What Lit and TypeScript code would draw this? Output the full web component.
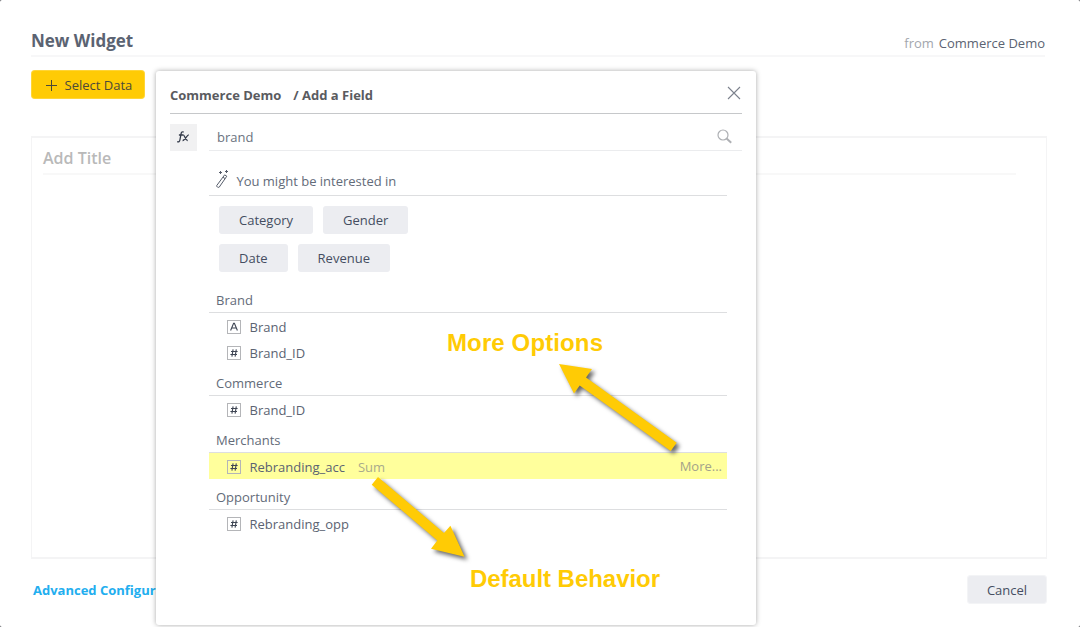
import { LitElement, html, css, svg } from "lit";
import { customElement, property } from "lit/decorators.js";

interface Field {
  kind: string;
  name: string;
  aggregate?: string;
}

interface Group {
  title: string;
  fields: Field[];
}

const SUGGESTIONS: string[][] = [
  ["Category", "Gender"],
  ["Date", "Revenue"],
];

const GROUPS: Group[] = [
  { title: "Brand", fields: [{ kind: "A", name: "Brand" }, { kind: "#", name: "Brand_ID" }] },
  { title: "Commerce", fields: [{ kind: "#", name: "Brand_ID" }] },
  { title: "Merchants", fields: [{ kind: "#", name: "Rebranding_acc", aggregate: "Sum" }] },
  { title: "Opportunity", fields: [{ kind: "#", name: "Rebranding_opp" }] },
];

@customElement("field-row")
class FieldRow extends LitElement {
  @property({ attribute: false }) field!: Field;

  static styles = css`
    :host { display: block; }
    .row {
      display: flex; align-items: center; height: 26px; box-sizing: border-box;
      padding: 0 5px 0 18px; color: #5b6372;
    }
    .active { background: #ffff9c; }
    .kind { width: 14px; height: 14px; margin: 1px 8.5px 0 0; flex: none; }
    .name, .agg { line-height: 18px; padding-top: 2px; }
    .agg { margin-left: 13px; color: #a9aa8c; }
    .more { margin-left: auto; color: #a3a38a; line-height: 18px; }
  `;

  render() {
    const f = this.field;
    const glyph =
      f.kind === "A"
        ? svg`<path d="M3.6 10.5 L6.6 3.4 H7.4 L10.4 10.5 M4.7 8 H9.3" />`
        : svg`<path d="M6.1 3.4 L4.9 10.6 M9.3 3.4 L8.1 10.6 M4 5.5 H10.6 M3.4 8.5 H10" />`;
    return html`
      <div class="row ${f.aggregate ? "active" : ""}">
        <svg class="kind" viewBox="0 0 14 14" fill="none">
          <rect x=".5" y=".5" width="13" height="13" stroke="#b4b5b8" />
          <g stroke="#3f4654" stroke-width="1.1">${glyph}</g>
        </svg>
        <span class="name">${f.name}</span>
        ${f.aggregate
          ? html`<span class="agg">${f.aggregate}</span><span class="more">More...</span>`
          : null}
      </div>
    `;
  }
}

@customElement("field-picker")
class FieldPicker extends LitElement {
  static styles = css`
    :host {
      display: block; box-sizing: border-box; background: #fff; border-radius: 3px;
      padding: 0 14px; box-shadow: 0 0 5px rgba(0, 0, 0, 0.34);
    }
    .head {
      display: flex; align-items: center; height: 43px; box-sizing: border-box;
      border-bottom: 1px solid #c6c8ca; font-weight: 700; color: #5a5b5f;
    }
    .crumb { padding-top: 6px; }
    .crumb + .crumb { margin-left: 12px; }
    .close { width: 14px; height: 14px; margin: 1px 1px 0 auto; }
    .search { display: flex; height: 27px; margin-top: 10px; }
    .fx { width: 27px; height: 27px; background: #f1f1f2; flex: none; }
    .query {
      flex: 1; display: flex; align-items: center; margin-left: 12px; padding: 0 9px 0 8px;
      border-bottom: 1px solid #ebecee; color: #6b7380;
    }
    .lens { width: 16px; height: 16px; margin-left: auto; }
    .body { margin: 0 15px 0 39px; }
    .hint {
      display: flex; align-items: flex-end; height: 45px; box-sizing: border-box;
      border-bottom: 1px solid #dddee0; padding: 0 0 5px 6px; color: #636b79;
    }
    .wand { width: 15px; height: 20px; margin: 0 6.4px 1px 0; }
    .hint-text { line-height: 18px; }
    .chips { display: grid; gap: 10px; padding: 10px 0 0 10px; }
    .chip-row { display: flex; gap: 10px; }
    .chip {
      height: 28px; line-height: 29px; border-radius: 3px; padding: 0 20px;
      background: #ecedf1; color: #454d61;
    }
    .groups { padding-top: 10px; }
    .title {
      height: 31px; box-sizing: border-box; padding: 9px 0 0 7px; line-height: 18px;
      border-bottom: 1px solid #dddee0; color: #636b79;
    }
  `;

  render() {
    return html`
      <div class="head">
        <span class="crumb">Commerce Demo</span>
        <span class="crumb">/ Add a Field</span>
        <svg class="close" viewBox="0 0 14 14" stroke="#7c828d" stroke-width="1.1">
          <path d="M1 1 L13 13 M13 1 L1 13" />
        </svg>
      </div>
      <div class="search">
        <svg class="fx" viewBox="0 0 27 27" fill="none" stroke="#343b4a" stroke-width="1.3">
          <path d="M13.7 8.1 C12.2 7.4 11.4 8.2 11.1 9.7 L9.9 16 C9.6 17.6 8.8 18.1 7.2 17.6 M8.9 11 H13" />
          <path d="M13 10.8 C14.8 10.4 15.2 16.9 17.7 16.5 M18.8 10.8 C17 10.7 14.9 16.8 12.6 16.5" />
        </svg>
        <div class="query">
          <span>brand</span>
          <svg class="lens" viewBox="0 0 16 16" fill="none" stroke="#aeb0b4">
            <circle cx="6" cy="6" r="5" stroke-width="1.2" />
            <path d="M9.6 9.6 L14.2 13.8" stroke-width="2" />
          </svg>
        </div>
      </div>
      <div class="body">
        <div class="hint">
          <svg class="wand" viewBox="0 0 15 20" fill="none" stroke="#555c6a">
            <path d="M9.6 5.9 L11.8 7.2 L4.2 18.2 C3 18.8 1.5 17.8 1.7 16.6 Z M8 8.3 L10.2 9.7" stroke-width="1" />
            <path d="M5.5 2 V5 M4 3.5 H7 M11.5 1 V4 M10 2.5 H13" />
          </svg>
          <span class="hint-text">You might be interested in</span>
        </div>
        <div class="chips">
          ${SUGGESTIONS.map(
            (row) => html`<div class="chip-row">${row.map((c) => html`<span class="chip">${c}</span>`)}</div>`
          )}
        </div>
        <div class="groups">
          ${GROUPS.map(
            (g) => html`
              <div class="title">${g.title}</div>
              ${g.fields.map((f) => html`<field-row .field=${f}></field-row>`)}
            `
          )}
        </div>
      </div>
    `;
  }
}

@customElement("app-root")
class AppRoot extends LitElement {
  static styles = css`
    :host {
      display: block; position: relative; width: 1080px; height: 627px; overflow: hidden;
      background: #55575c; font: 13px "Open Sans", "Noto Sans", sans-serif;
    }
    .dialog {
      height: 627px; box-sizing: border-box; background: #fff; border-radius: 2px;
      padding: 0 33px 0 31px;
    }
    .header {
      display: flex; justify-content: space-between; height: 57px; box-sizing: border-box;
      border-bottom: 2px solid #f7f7f8; margin-right: 2px;
    }
    .title { font-size: 17px; font-weight: 700; color: #5b6372; line-height: 24px; padding-top: 29px; }
    .source { line-height: 18px; padding-top: 34px; color: #5b6372; }
    .from { color: #a2a6ad; margin-right: 5px; }
    .select {
      display: flex; align-items: center; width: 114px; height: 29px; box-sizing: border-box;
      margin-top: 13px; padding: 1px 0 0 15px; border-radius: 4px;
      background: #ffcb05; color: #4c4a3a; box-shadow: inset 0 0 0 1px rgba(255, 255, 255, 0.2);
    }
    .plus { width: 11px; height: 11px; margin-right: 7.5px; }
    .canvas {
      height: 423px; margin: 37px 0 0; box-sizing: border-box;
      border: solid #f4f4f5; border-width: 2px 1px; padding: 0 30px 0 11px;
    }
    .canvas-title {
      height: 37px; box-sizing: border-box; border-bottom: 2px solid #f8f8f8;
      font-size: 16px; font-weight: 600; line-height: 22px; padding-top: 9px; color: #b9b9b9;
    }
    .footer { display: flex; justify-content: space-between; padding: 16px 0 0 2px; }
    .advanced { font-weight: 700; color: #22aeef; line-height: 31px; }
    .cancel {
      width: 80px; height: 29px; border-radius: 4px; background: #ecedf1; color: #454d61;
      line-height: 31px; text-align: center; box-shadow: inset 0 0 0 1px rgba(255, 255, 255, 0.4);
    }
    .picker { position: absolute; left: 156px; top: 71px; width: 600px; height: 554px; }
    .notes { position: absolute; left: 0; top: 0; width: 1080px; height: 627px; }
    .arrow { fill: #ffcb05; filter: drop-shadow(3px 3px 2px rgba(0, 0, 0, 0.6)); }
    .note {
      font: bold 24px "Liberation Sans", Arial, sans-serif; fill: #ffcb05;
    }
  `;

  render() {
    return html`
      <div class="dialog">
        <div class="header">
          <div class="title">New Widget</div>
          <div class="source"><span class="from">from</span>Commerce Demo</div>
        </div>
        <div class="select">
          <svg class="plus" viewBox="0 0 11 11" stroke="#4c4a3a"><path d="M0 5.5 H11 M5.5 0 V11" /></svg>
          <span>Select Data</span>
        </div>
        <div class="canvas"><div class="canvas-title">Add Title</div></div>
        <div class="footer">
          <div class="advanced">Advanced Configuration</div>
          <div class="cancel">Cancel</div>
        </div>
      </div>
      <field-picker class="picker"></field-picker>
      <svg class="notes" viewBox="0 0 1080 627">
        <path class="arrow" d="M559 364 L592 369 L586 377.5 L676.7 442.7 L670.7 451 L579.7 385.5 L574 393.5 Z" />
        <path class="arrow" d="M464.5 556.7 L431 548.7 L437.3 540.5 L371.7 484.7 L378 476.9 L444 533 L450.4 525.7 Z" />
        <text class="note" x="447" y="351" textLength="156">More Options</text>
        <text class="note" x="470" y="587" textLength="190">Default Behavior</text>
      </svg>
    `;
  }
}
